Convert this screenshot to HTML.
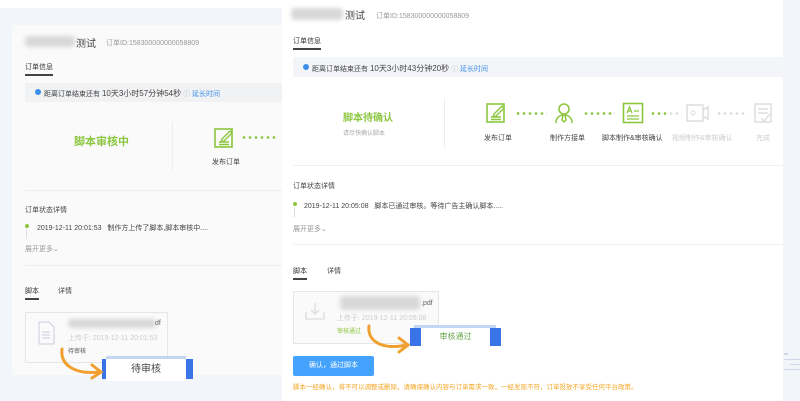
<!DOCTYPE html>
<html><head><meta charset="utf-8"><style>
*{margin:0;padding:0;box-sizing:border-box}
body{width:800px;height:401px;overflow:hidden;background:#fff;font-family:"Liberation Sans","Noto Sans CJK SC",sans-serif;position:relative;color:#333}
.a{position:absolute;white-space:nowrap}
.s{font-size:7px;color:#555}
.blur{position:absolute;background:#d8d8d8;filter:blur(2px);border-radius:4px}
.dots{position:absolute;height:3px;background:radial-gradient(circle,#8cc63f 1.2px,transparent 1.5px) 0 0/6px 3px repeat-x}
.dotsg{position:absolute;height:3px;background:radial-gradient(circle,#ddd 1.2px,transparent 1.5px) 0 0/6px 3px repeat-x}
</style></head><body>
<div class="a" style="left:0;top:8px;width:282px;height:393px;background:#f2f5fa"></div>
<div class="a" style="left:12px;top:25px;width:270px;height:350px;background:#fafafb"></div>
<div class="blur" style="left:25px;top:36px;width:50px;height:11px"></div>
<div class="a" style="left:76px;top:35px;font-size:10px;color:#444">测试</div>
<div class="a s" style="left:106px;top:38px;color:#999">订单ID:158300000000058809</div>
<div class="a s" style="left:25px;top:62px;color:#333">订单信息</div>
<div class="a" style="left:25px;top:74px;width:28px;height:2px;background:#444"></div>
<div class="a" style="left:25px;top:83px;width:257px;height:19px;background:#f1f2f4"></div>
<div class="a" style="left:35px;top:89px;width:6px;height:6px;border-radius:50%;background:#3d8ee8"></div>
<div class="a s" style="left:44px;top:88px;color:#444">距离订单结束还有 <span style="font-size:8px">10天3小时57分钟54秒</span> <span style="color:#bbb">ⓘ</span> <span style="color:#3d8ee8">延长时间</span></div>
<div class="a" style="left:74px;top:133px;font-size:11px;color:#8cc63f;font-weight:bold">脚本审核中</div>
<div class="a" style="left:172px;top:122px;width:1px;height:48px;background:#eee"></div>
<svg class="a" style="left:213px;top:127px" width="22" height="22" viewBox="0 0 22 22"><rect x="2" y="2" width="17" height="18" fill="none" stroke="#8cc63f" stroke-width="1.6"/><path d="M6 15h10M6 17.5h10M9 12l8-8 2 2-8 8-3 1z" fill="none" stroke="#8cc63f" stroke-width="1.4"/></svg>
<div class="dots" style="left:241px;top:136px;width:36px"></div>
<div class="a s" style="left:212px;top:157px;color:#444">发布订单</div>
<div class="a" style="left:25px;top:190px;width:257px;height:1px;background:#eee"></div>
<div class="a s" style="left:25px;top:205px;color:#444">订单状态详情</div>
<div class="a" style="left:25px;top:224px;width:4px;height:4px;border-radius:50%;background:#8cc63f"></div>
<div class="a" style="left:26px;top:229px;width:1px;height:10px;background:#ddd"></div>
<div class="a s" style="left:37px;top:223px;color:#444">2019-12-11 20:01:53 &nbsp; 制作方上传了脚本,脚本审核中....</div>
<div class="a s" style="left:25px;top:244px;color:#999">展开更多⌄</div>
<div class="a" style="left:25px;top:265px;width:257px;height:1px;background:#eee"></div>
<div class="a s" style="left:25px;top:286px;color:#333">脚本</div>
<div class="a s" style="left:58px;top:286px;color:#444">详情</div>
<div class="a" style="left:25px;top:298px;width:14px;height:2px;background:#444"></div>
<div class="a" style="left:25px;top:312px;width:143px;height:51px;border:1px solid #e6e6e6;background:#fafafa"></div>
<svg class="a" style="left:37px;top:321px" width="18" height="24" viewBox="0 0 18 24"><path d="M2 1h10l5 5v17H2z" fill="none" stroke="#ccd" stroke-width="1"/><path d="M5 11h8M5 14h8M5 17h8" stroke="#ccd"/></svg>
<div class="blur" style="left:68px;top:319px;width:88px;height:9px"></div>
<div class="a s" style="left:155px;top:320px;color:#666">df</div>
<div class="a s" style="left:68px;top:333px;color:#ccc">上传于: 2019-12-11 20:01:53</div>
<div class="a" style="left:68px;top:346px;font-size:6px;color:#555">待审核</div>
<div class="a" style="left:106px;top:356px;width:80px;height:4px;background:#c5d6f5"></div>
<div class="a" style="left:102px;top:359px;width:91px;height:20px;background:#3a72e8"></div>
<div class="a" style="left:106px;top:359px;width:80px;height:22px;background:#fff;font-size:10px;color:#444;text-align:center;line-height:22px">待审核</div>
<svg class="a" style="left:55px;top:345px" width="55" height="35"><path d="M7 4C5 20 20 30 45 27" fill="none" stroke="#f0a030" stroke-width="3" stroke-linecap="round"/><path d="M37 20l9 7-9 6" fill="none" stroke="#f0a030" stroke-width="3" stroke-linecap="round"/></svg>
<div class="a" style="left:282px;top:0;width:501px;height:401px;background:#fff"></div>
<div class="a" style="left:783px;top:0;width:17px;height:401px;background:#f2f5fa"></div>
<div class="a" style="left:784px;top:353px;width:4px;height:2px;background:#cfd8e8"></div>
<div class="a" style="left:784px;top:359px;width:16px;height:1px;background:#cfd8e8"></div>
<div class="a" style="left:790px;top:364px;width:10px;height:1px;background:#cfd8e8"></div>
<div class="a" style="left:784px;top:369px;width:16px;height:1px;background:#cfd8e8"></div>
<div class="blur" style="left:291px;top:8px;width:52px;height:12px"></div>
<div class="a" style="left:345px;top:7px;font-size:10px;color:#444">测试</div>
<div class="a s" style="left:376px;top:11px;color:#999">订单ID:158300000000058809</div>
<div class="a s" style="left:293px;top:36px;color:#333">订单信息</div>
<div class="a" style="left:293px;top:48px;width:28px;height:2px;background:#444"></div>
<div class="a" style="left:293px;top:57px;width:490px;height:20px;background:#f3f5f8"></div>
<div class="a" style="left:303px;top:64px;width:6px;height:6px;border-radius:50%;background:#3d8ee8"></div>
<div class="a s" style="left:312px;top:63px;color:#444">距离订单结束还有 <span style="font-size:8px">10天3小时43分钟20秒</span> <span style="color:#bbb">ⓘ</span> <span style="color:#3d8ee8">延长时间</span></div>
<div class="a" style="left:343px;top:109px;font-size:10px;color:#8cc63f;font-weight:bold">脚本待确认</div>
<div class="a" style="left:343px;top:128px;font-size:6px;color:#aaa">请尽快确认脚本</div>
<div class="a" style="left:444px;top:98px;width:1px;height:50px;background:#eee"></div>
<svg class="a" style="left:485px;top:102px" width="22" height="22" viewBox="0 0 22 22"><rect x="2" y="2" width="17" height="18" fill="none" stroke="#8cc63f" stroke-width="1.6"/><path d="M6 15h10M6 17.5h10M9 12l8-8 2 2-8 8-3 1z" fill="none" stroke="#8cc63f" stroke-width="1.4"/></svg>
<div class="dots" style="left:515px;top:112px;width:32px"></div>
<svg class="a" style="left:554px;top:102px" width="20" height="22" viewBox="0 0 20 22"><circle cx="10" cy="7" r="5" fill="none" stroke="#8cc63f" stroke-width="1.6"/><path d="M2 21c0-5 3-8 8-8s8 3 8 8M9 13l-1 5 2 2 2-2-1-5" fill="none" stroke="#8cc63f" stroke-width="1.5"/></svg>
<div class="dots" style="left:583px;top:112px;width:32px"></div>
<svg class="a" style="left:622px;top:102px" width="22" height="22" viewBox="0 0 22 22"><rect x="1.5" y="1.5" width="19" height="19" fill="none" stroke="#8cc63f" stroke-width="1.6"/><path d="M5 11l2.5-6 2.5 6M6 9h3M12 9h5M5 14h12M5 17h12" fill="none" stroke="#8cc63f" stroke-width="1.3"/></svg>
<div class="dots" style="left:650px;top:112px;width:18px"></div>
<div class="dotsg" style="left:668px;top:112px;width:14px"></div>
<svg class="a" style="left:686px;top:104px" width="24" height="18" viewBox="0 0 24 18"><rect x="1" y="1" width="16" height="16" fill="none" stroke="#ddd" stroke-width="1.5"/><circle cx="7" cy="9" r="2" fill="none" stroke="#ddd"/><path d="M17 6l5-3v12l-5-3" fill="none" stroke="#ddd" stroke-width="1.5"/></svg>
<div class="dotsg" style="left:716px;top:112px;width:32px"></div>
<svg class="a" style="left:753px;top:102px" width="20" height="22" viewBox="0 0 20 22"><path d="M2 2h16v18H2z" fill="none" stroke="#ddd" stroke-width="1.5"/><path d="M5 7h10M5 11h10M8 16l3 3 6-7" fill="none" stroke="#ddd" stroke-width="1.4"/></svg>
<div class="a s" style="left:484px;top:133px;color:#444">发布订单</div>
<div class="a s" style="left:550px;top:133px;color:#444">制作方接单</div>
<div class="a s" style="left:602px;top:133px;color:#444">脚本制作&amp;审核确认</div>
<div class="a s" style="left:672px;top:133px;color:#ccc">视频制作&amp;审核确认</div>
<div class="a s" style="left:756px;top:133px;color:#ccc">完成</div>
<div class="a" style="left:293px;top:165px;width:490px;height:1px;background:#f0f0f0"></div>
<div class="a s" style="left:293px;top:181px;color:#444">订单状态详情</div>
<div class="a" style="left:293px;top:202px;width:4px;height:4px;border-radius:50%;background:#8cc63f"></div>
<div class="a" style="left:294px;top:207px;width:1px;height:10px;background:#ddd"></div>
<div class="a s" style="left:304px;top:201px;color:#444">2019-12-11 20:05:08 &nbsp; 脚本已通过审核。等待广告主确认脚本.....</div>
<div class="a s" style="left:293px;top:224px;color:#999">展开更多⌄</div>
<div class="a" style="left:293px;top:244px;width:490px;height:1px;background:#f0f0f0"></div>
<div class="a s" style="left:293px;top:266px;color:#333">脚本</div>
<div class="a s" style="left:327px;top:266px;color:#444">详情</div>
<div class="a" style="left:293px;top:278px;width:14px;height:2px;background:#444"></div>
<div class="a" style="left:293px;top:291px;width:146px;height:53px;border:1px solid #e6e6e6;background:#fafafa"></div>
<svg class="a" style="left:305px;top:302px" width="20" height="18" viewBox="0 0 20 18"><path d="M1 10v7h18v-7M10 1v11M6 8l4 4 4-4" fill="none" stroke="#ddd" stroke-width="1.3"/></svg>
<div class="blur" style="left:340px;top:296px;width:80px;height:14px"></div>
<div class="a s" style="left:421px;top:300px;color:#666">.pdf</div>
<div class="a s" style="left:337px;top:313px;color:#ccc">上传于: 2019-12-11 20:05:08</div>
<div class="a" style="left:337px;top:326px;font-size:6px;color:#8cc63f">审核通过</div>
<div class="a" style="left:414px;top:325px;width:82px;height:4px;background:#c5d6f5"></div>
<div class="a" style="left:410px;top:328px;width:91px;height:18px;background:#3a72e8"></div>
<div class="a" style="left:421px;top:328px;width:69px;height:18px;background:#fff;font-size:8px;color:#6aa84f;text-align:center;line-height:17px">审核通过</div>
<svg class="a" style="left:363px;top:322px" width="52" height="34"><path d="M6 4C4 20 20 28 44 23" fill="none" stroke="#f0a030" stroke-width="3" stroke-linecap="round"/><path d="M36 16l9 7-9 7" fill="none" stroke="#f0a030" stroke-width="3" stroke-linecap="round"/></svg>
<div class="a" style="left:293px;top:356px;width:81px;height:20px;background:#44a2fc;border-radius:2px;color:#fff;font-size:7px;text-align:center;line-height:20px">确认，通过脚本</div>
<div class="a" style="left:293px;top:381px;font-size:6.5px;color:#f5a623">脚本一经确认，将不可以调整或删除，请确保确认内容与订单需求一致，一经发现不符，订单投放不享受任何平台政策。</div>
</body></html>
